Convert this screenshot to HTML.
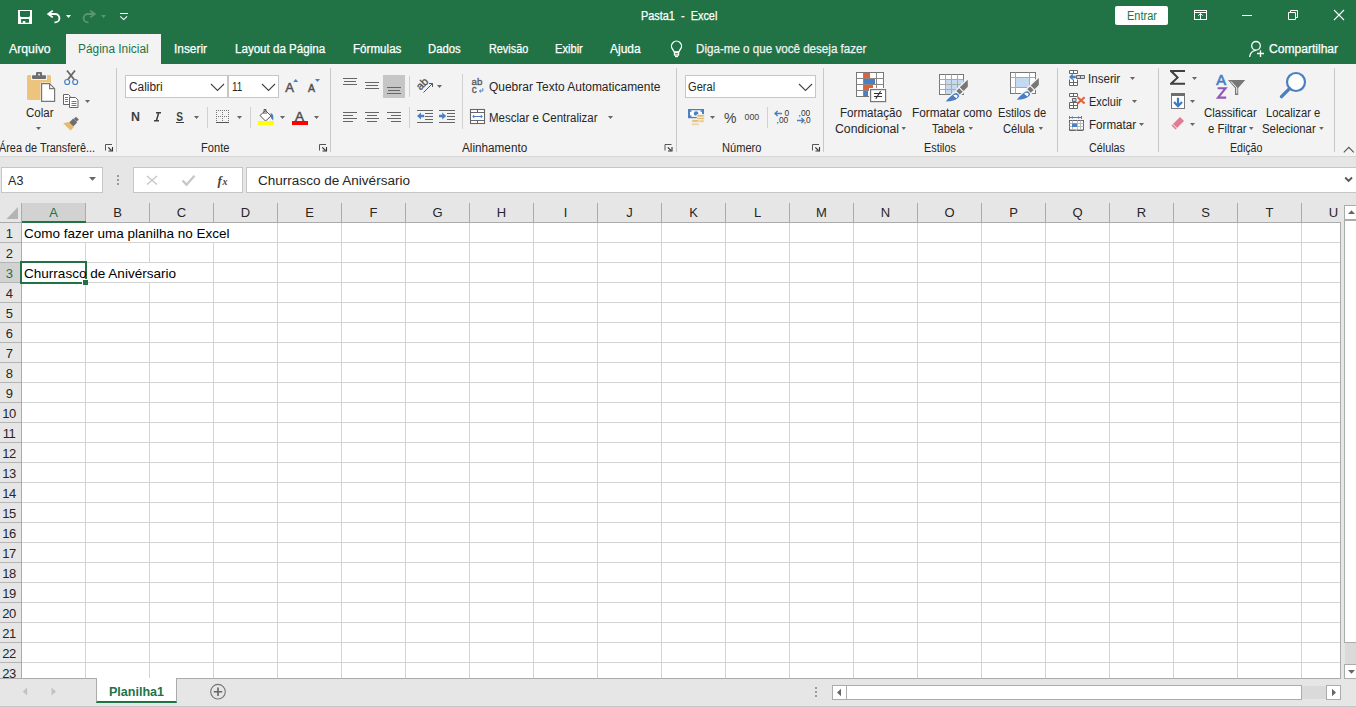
<!DOCTYPE html>
<html><head><meta charset="utf-8"><style>
*{box-sizing:border-box}
html,body{margin:0;padding:0}
body{width:1356px;height:707px;overflow:hidden;position:relative;background:#e6e6e6;font-family:"Liberation Sans",sans-serif}
.t{position:absolute;white-space:pre;transform-origin:0 0}
.abs{position:absolute}
.ch{position:absolute;top:203px;width:64px;height:19px;border-right:1px solid #ababab;font-size:13px;line-height:15px;padding-top:2px;text-align:center;color:#262626}
.rh{position:absolute;left:0;width:21px;height:20px;border-bottom:1px solid #b4b4b4;font-size:13px;line-height:15px;padding-top:3px;padding-right:3px;text-align:center;color:#262626;letter-spacing:-0.5px}
.sep{position:absolute;width:1px;background:#c8c8c8}
svg{position:absolute;overflow:visible}
</style></head><body>
<div class="abs" style="left:0;top:0;width:1356px;height:64px;background:#217346"></div>
<div class="abs" style="left:66px;top:34px;width:95px;height:30px;background:#f3f3f3"></div>
<div class="abs" style="left:1115px;top:6px;width:53px;height:19px;background:#fff;border-radius:2px"></div>
<div class="abs" style="left:0;top:64px;width:1356px;height:92px;background:#f3f3f3"></div>
<div class="abs" style="left:0;top:156px;width:1356px;height:1px;background:#d6d6d6"></div>
<!-- formula bar -->
<div class="abs" style="left:1px;top:167px;width:102px;height:26px;background:#fff;border:1px solid #c6c6c6"></div>
<div class="abs" style="left:133px;top:167px;width:110px;height:26px;background:#fff;border:1px solid #c6c6c6"></div>
<div class="abs" style="left:246px;top:167px;width:1115px;height:26px;background:#fff;border:1px solid #c6c6c6"></div>
<!-- grid -->
<div class="abs" style="left:22px;top:223px;width:1318px;height:455px;background-color:#fff;background-image:linear-gradient(to right,transparent 63px,#d4d4d4 63px),linear-gradient(to bottom,transparent 19px,#d4d4d4 19px);background-size:64px 20px,64px 20px"></div>
<div class="abs" style="left:85px;top:223px;width:1px;height:19px;background:#fff"></div>
<div class="abs" style="left:149px;top:223px;width:1px;height:19px;background:#fff"></div>
<div class="abs" style="left:213px;top:223px;width:1px;height:19px;background:#fff"></div>
<div class="abs" style="left:149px;top:263px;width:1px;height:19px;background:#fff"></div>
<div class="ch" style="left:22px;background:#d2d2d2;color:#217346;">A</div><div class="ch" style="left:86px;">B</div><div class="ch" style="left:150px;">C</div><div class="ch" style="left:214px;">D</div><div class="ch" style="left:278px;">E</div><div class="ch" style="left:342px;">F</div><div class="ch" style="left:406px;">G</div><div class="ch" style="left:470px;">H</div><div class="ch" style="left:534px;">I</div><div class="ch" style="left:598px;">J</div><div class="ch" style="left:662px;">K</div><div class="ch" style="left:726px;">L</div><div class="ch" style="left:790px;">M</div><div class="ch" style="left:854px;">N</div><div class="ch" style="left:918px;">O</div><div class="ch" style="left:982px;">P</div><div class="ch" style="left:1046px;">Q</div><div class="ch" style="left:1110px;">R</div><div class="ch" style="left:1174px;">S</div><div class="ch" style="left:1238px;">T</div><div class="ch" style="left:1302px;">U</div>
<div class="abs" style="left:0;top:222px;width:1340px;height:1px;background:#ababab"></div>
<div class="abs" style="left:22px;top:221px;width:64px;height:2px;background:#217346"></div>
<div class="rh" style="top:223px;">1</div><div class="rh" style="top:243px;">2</div><div class="rh" style="top:263px;background:#d2d2d2;color:#217346;">3</div><div class="rh" style="top:283px;">4</div><div class="rh" style="top:303px;">5</div><div class="rh" style="top:323px;">6</div><div class="rh" style="top:343px;">7</div><div class="rh" style="top:363px;">8</div><div class="rh" style="top:383px;">9</div><div class="rh" style="top:403px;">10</div><div class="rh" style="top:423px;">11</div><div class="rh" style="top:443px;">12</div><div class="rh" style="top:463px;">13</div><div class="rh" style="top:483px;">14</div><div class="rh" style="top:503px;">15</div><div class="rh" style="top:523px;">16</div><div class="rh" style="top:543px;">17</div><div class="rh" style="top:563px;">18</div><div class="rh" style="top:583px;">19</div><div class="rh" style="top:603px;">20</div><div class="rh" style="top:623px;">21</div><div class="rh" style="top:643px;">22</div><div class="rh" style="top:663px;">23</div>
<div class="abs" style="left:21px;top:203px;width:1px;height:475px;background:#ababab"></div>
<div class="abs" style="left:1340px;top:222px;width:1px;height:457px;background:#ababab"></div>
<div class="abs" style="left:1341px;top:203px;width:15px;height:476px;background:#e6e6e6"></div>
<!-- sheet bar -->
<div class="abs" style="left:0;top:678px;width:1356px;height:29px;background:#e6e6e6"></div>
<div class="abs" style="left:0;top:678px;width:1341px;height:1px;background:#ababab"></div>
<div class="abs" style="left:96px;top:678px;width:81px;height:25px;background:#fff;border-left:1px solid #ababab;border-right:1px solid #ababab;border-bottom:2px solid #217346"></div>
<div class="abs" style="left:0;top:706px;width:1356px;height:1px;background:#c6c6c6"></div>
<svg width="1356" height="707" style="left:0;top:0" viewBox="0 0 1356 707">
<!-- ===== Title bar ===== -->
<g fill="#fff">
  <path d="M18 10h14v14h-14z M20 11.1V16L21 17H29L30 16V11.1z M21.1 19V22.8H22.8V21H25.3V22.8H29V19z" fill-rule="evenodd"/>
</g>
<g fill="none" stroke="#fff" stroke-width="1.9">
  <path d="M49 14h6a4.4 4.2 0 0 1 0 8.4h-0.5"/>
</g>
<path d="M46.7 14 L52.2 9.9 L53.3 11.3 L49.8 14 L53.3 16.7 L52.2 18.1Z" fill="#fff"/>
<path d="M66 15h5l-2.5 3z" fill="#fff"/>
<g opacity="0.25">
  <path d="M94 14h-6a4.4 4.2 0 0 0 0 8.4h0.5" fill="none" stroke="#fff" stroke-width="1.9"/>
  <path d="M96.3 14 L90.8 9.9 L89.7 11.3 L93.2 14 L89.7 16.7 L90.8 18.1Z" fill="#fff"/>
  <path d="M101 15h5l-2.5 3z" fill="#fff"/>
</g>
<path d="M120 13.5h8" stroke="#fff" stroke-width="1"/>
<path d="M120.3 16.3l3.4 3.3l3.4-3.3" fill="none" stroke="#fff" stroke-width="1.1"/>
<!-- ribbon display options -->
<g fill="none" stroke="#fff" stroke-width="1">
  <rect x="1194.5" y="10.5" width="12" height="9"/>
  <path d="M1194.5 12.5h12 M1200.5 13.5v6 M1198.3 15.7l2.2-2.2l2.2 2.2"/>
  <path d="M1242 15.5h10"/>
  <path d="M1288.5 12.5h7v7h-7z M1290.5 12.5v-2h7v7h-2"/>
  <path d="M1334 10l10 10 M1344 10l-10 10" stroke-width="1.1"/>
</g>
<!-- bulb -->
<g fill="none" stroke="#fff" stroke-width="1.35">
  <path d="M674.3 52 L672.6 49.2 A5 5 0 1 1 680.4 49.2 L678.7 52 Z"/>
  <rect x="674.5" y="52.5" width="4" height="2.5"/>
  <path d="M675 56.5h3"/>
</g>
<!-- person -->
<g fill="none" stroke="#fff" stroke-width="1.3">
  <circle cx="1256" cy="45.8" r="4.3"/>
  <path d="M1249.6 57 Q1250.2 51 1256 50.3"/>
  <path d="M1260.5 50.3v6.7 M1257 53.5h7"/>
</g>

<!-- ===== Ribbon: Clipboard ===== -->
<rect x="27" y="75" width="24" height="25" rx="1.5" fill="#ecc47e"/>
<rect x="31" y="74" width="16" height="6" fill="#f3f3f3"/>
<rect x="32" y="75.3" width="14" height="3.6" rx="0.8" fill="#6e6e6e"/>
<rect x="36" y="72" width="6" height="4.5" rx="1" fill="#6e6e6e"/>
<rect x="38.3" y="73.8" width="1.6" height="1.6" fill="#f3f3f3"/>
<path d="M40.5 82.5H50L56 88.5V102.5H40.5Z" fill="#f3f3f3"/>
<path d="M41.6 83.6H49.5L54.6 88.7V101.4H41.6Z" fill="#fff" stroke="#777" stroke-width="1.2"/>
<path d="M49.6 83.6V88.6H54.6" fill="none" stroke="#777" stroke-width="1.2"/>
<path d="M36 127h5l-2.5 3z" fill="#666"/>
<!-- scissors -->
<path d="M67 70.5L74.5 80 M75 70.5L67.5 80" stroke="#666" stroke-width="1.8" fill="none"/>
<circle cx="67.2" cy="82" r="2.5" fill="#f3f3f3" stroke="#4a7fc1" stroke-width="1.2"/>
<circle cx="75.2" cy="82" r="2.5" fill="#f3f3f3" stroke="#4a7fc1" stroke-width="1.2"/>
<!-- copy -->
<path d="M63.5 94.5h5l1.5 1.5v8.5h-6.5z" fill="#fff" stroke="#666" stroke-width="1"/>
<path d="M65 97.5h3 M65 99.5h3 M65 101.5h3" stroke="#4a7fc1" stroke-width="1"/>
<path d="M69.5 97.5h6l2.5 2.5v7.5h-8.5z" fill="#fff" stroke="#666" stroke-width="1"/>
<path d="M71.5 101.5h5 M71.5 103.5h5 M71.5 105.5h5" stroke="#4a7fc1" stroke-width="1"/>
<path d="M85 100h5l-2.5 3z" fill="#666"/>
<!-- format painter -->
<path d="M75.2 117.6L78.6 121" stroke="#6e6e6e" stroke-width="0" /><path d="M76 116.8 L78.8 119.6 L76.6 121.8 L73.8 119Z" fill="#6e6e6e"/>
<path d="M69.2 122.6 L73.2 118.6 L77.2 122.6 L73.2 126.6Z" fill="#6e6e6e"/>
<path d="M63.2 123.2 L68.6 122 L73.8 127.2 L70.6 130.6Z" fill="#e8b96a"/>
<!-- launchers -->
<g id="launch">
  <path d="M105.5 150.5V144.5H112" fill="none" stroke="#555" stroke-width="1"/>
  <path d="M108.3 147.3L111.5 150.5" stroke="#333" stroke-width="1.1"/>
  <path d="M108.5 151H112.5V147" fill="none" stroke="#333" stroke-width="1.1"/>
</g>
<use href="#launch" x="214" y="0"/>
<use href="#launch" x="559.5" y="0"/>
<use href="#launch" x="707" y="0"/>
<!-- separators -->
<g fill="#c8c8c8">
  <rect x="116" y="68" width="1" height="84"/>
  <rect x="330" y="68" width="1" height="84"/>
  <rect x="676" y="68" width="1" height="84"/>
  <rect x="823" y="68" width="1" height="84"/>
  <rect x="1057" y="68" width="1" height="84"/>
  <rect x="1158" y="68" width="1" height="84"/>
  <rect x="1334" y="68" width="1" height="84"/>
  <rect x="207" y="107" width="1" height="21" fill="#d0d0d0"/>
  <rect x="250" y="107" width="1" height="21" fill="#d0d0d0"/>
  <rect x="409" y="76" width="1" height="21" fill="#d0d0d0"/>
  <rect x="409" y="107" width="1" height="21" fill="#d0d0d0"/>
  <rect x="462" y="74" width="1" height="55" fill="#d0d0d0"/>
  <rect x="767" y="107" width="1" height="21" fill="#d0d0d0"/>
</g>
<!-- ===== Font group ===== -->
<rect x="125.5" y="75.5" width="102" height="22" fill="#fff" stroke="#c6c6c6"/>
<rect x="228.5" y="75.5" width="50" height="22" fill="#fff" stroke="#c6c6c6"/>
<path d="M211 84l6.5 6.5l6.5-6.5 M262 84l6.5 6.5l6.5-6.5" fill="none" stroke="#444" stroke-width="1.1"/>
<text x="285.3" y="92" font-family="Liberation Sans" font-size="13" fill="#505050" stroke="#505050" stroke-width="0.45">A</text>
<path d="M293.2 82h5l-2.5-3z" fill="#4a7fc1"/>
<text x="308" y="92" font-family="Liberation Sans" font-size="10.5" fill="#505050" stroke="#505050" stroke-width="0.45">A</text>
<path d="M315 79h5l-2.5 3z" fill="#4a7fc1"/>
<text x="131" y="121" font-family="Liberation Sans" font-size="12.4" font-weight="bold" fill="#404040">N</text>
<path d="M156 112.7h5 M154 120.8h5 M158.7 112.7l-2.3 8.1" fill="none" stroke="#404040" stroke-width="1.5"/>
<text x="176.2" y="121" font-family="Liberation Sans" font-size="12.4" font-weight="bold" fill="#404040" transform="translate(176.2 0) scale(0.82 1) translate(-176.2 0)">S</text>
<rect x="176" y="122" width="8" height="1" fill="#404040"/>
<path d="M194 116h5l-2.5 3z" fill="#666"/>
<!-- borders -->
<g fill="#777">
  <path d="M216 110h1v1h-1z" id="dot"/>
</g>
<path d="M216.5 110v12 M222.5 110v12 M228.5 110v12 M216 110.5h13 M216 116.5h13" stroke="#777" stroke-width="1" stroke-dasharray="1 1" fill="none"/>
<rect x="216" y="122" width="13" height="1" fill="#555"/>
<path d="M237 116h5l-2.5 3z" fill="#666"/>
<!-- fill bucket -->
<path d="M265.5 110.5 L271 116 L265.5 121 L260 115.5 Z" fill="#fff" stroke="#555" stroke-width="1"/>
<path d="M264 114 V109.5 H266 V114" fill="none" stroke="#555" stroke-width="1"/>
<path d="M270.5 113 Q274.5 114 273 120.5 L271 118 Z" fill="#4a7fc1"/>
<rect x="258" y="121" width="16" height="4" fill="#ffff00"/>
<path d="M280 116h5l-2.5 3z" fill="#666"/>
<text x="295" y="121" font-family="Liberation Sans" font-size="13.5" fill="#505050" stroke="#505050" stroke-width="0.5">A</text>
<rect x="292" y="121" width="16" height="4" fill="#ff0000"/>
<path d="M314 116h5l-2.5 3z" fill="#666"/>

<!-- ===== Alignment ===== -->
<rect x="383" y="75" width="22" height="23" fill="#c6c6c6"/>
<g stroke="#666" stroke-width="1" fill="none">
  <path d="M343 78.5h14 M344 81.5h12 M343 84.5h14"/>
  <path d="M365 82.5h14 M366 85.5h12 M365 88.5h14"/>
  <path d="M387 87.5h14 M388 90.5h12 M387 93.5h14"/>
  <path d="M343 112.5h14 M343 115.5h10 M343 118.5h14 M343 121.5h10"/>
  <path d="M365 112.5h14 M367 115.5h10 M365 118.5h14 M367 121.5h10"/>
  <path d="M387 112.5h14 M391 115.5h10 M387 118.5h14 M391 121.5h10"/>
  <path d="M417 110.5h16 M425 113.5h8 M425 116.5h8 M425 119.5h8 M417 122.5h16"/>
  <path d="M439 110.5h16 M447 113.5h8 M447 116.5h8 M447 119.5h8 M439 122.5h16"/>
</g>
<path d="M417 116 L421 112.4 L421 114.8 L424.2 114.8 L424.2 117.2 L421 117.2 L421 119.6Z" fill="#4a7fc1"/>
<path d="M446.2 116 L442.2 112.4 L442.2 114.8 L439 114.8 L439 117.2 L442.2 117.2 L442.2 119.6Z" fill="#4a7fc1"/>
<!-- orientation -->
<text x="0" y="0" font-family="Liberation Sans" font-size="11" fill="#555" stroke="#555" stroke-width="0.35" transform="translate(420.4,90.8) rotate(-45)">ab</text>
<path d="M423.5 92.5L432.5 83.5 M429 83.5h3.5v3.5" fill="none" stroke="#555" stroke-width="1"/>
<path d="M437 85h5l-2.5 3z" fill="#666"/>
<!-- wrap text -->
<text x="471.6" y="85.3" font-family="Liberation Sans" font-size="9.8" fill="#555" stroke="#555" stroke-width="0.3">ab</text>
<text x="471.8" y="93" font-family="Liberation Sans" font-size="10" fill="#555" stroke="#555" stroke-width="0.3">c</text>
<path d="M482.8 88.2v2.8h-3.3 M481 89.6l-1.5 1.4l1.5 1.4" fill="none" stroke="#4a7fc1" stroke-width="1"/>
<!-- merge -->
<rect x="470.5" y="109.5" width="14" height="14" fill="#fff" stroke="#666" stroke-width="1.1"/>
<path d="M470.5 112.5h14 M470.5 120.5h14 M477.5 109.5v3 M477.5 120.5v3" stroke="#666" stroke-width="1" fill="none"/>
<path d="M473 116.5h9" stroke="#4a7fc1" stroke-width="1"/>
<path d="M472.2 116.5l2-2v4z M482.8 116.5l-2-2v4z" fill="#4a7fc1"/>
<path d="M608 116h5l-2.5 3z" fill="#666"/>

<!-- ===== Number ===== -->
<rect x="685.5" y="75.5" width="130" height="22" fill="#fff" stroke="#c6c6c6"/>
<path d="M799 84l6.5 6.5l6.5-6.5" fill="none" stroke="#444" stroke-width="1.1"/>
<!-- accounting -->
<rect x="688" y="109" width="16" height="9.2" fill="#4a7fc1"/>
<rect x="690" y="110.3" width="12" height="6.6" fill="#fff"/>
<circle cx="696.1" cy="113.5" r="2.3" fill="#4a7fc1"/>
<rect x="690" y="110.3" width="1.5" height="1.5" fill="#4a7fc1"/>
<rect x="700.5" y="110.3" width="1.5" height="1.5" fill="#4a7fc1"/>
<rect x="690" y="115.4" width="1.5" height="1.5" fill="#4a7fc1"/>
<g fill="#e8b96a" stroke="#f3f3f3" stroke-width="0.9">
  <rect x="696.6" y="114.4" width="7.8" height="2.8" rx="1.3"/>
  <rect x="696.6" y="117.4" width="7.8" height="2.4" rx="1.1"/>
  <rect x="697.6" y="120" width="6.8" height="2.2" rx="1"/>
  <rect x="691.6" y="119.6" width="7.6" height="2.8" rx="1.3"/>
  <rect x="691.6" y="122.4" width="7.6" height="1.6" rx="0.7"/>
  <rect x="691.6" y="124" width="7.6" height="1.6" rx="0.7"/>
</g>
<path d="M710 116h5l-2.5 3z" fill="#666"/>
<text x="724" y="123" font-family="Liberation Sans" font-size="14" fill="#444">%</text>
<text x="744.5" y="120" font-family="Liberation Sans" font-size="9.8" fill="#444" transform="translate(744.5 0) scale(0.9 1) translate(-744.5 0)">000</text>
<!-- inc decimal -->
<path d="M775 113.5h7 M777.6 111l-2.6 2.5l2.6 2.5" fill="none" stroke="#4a7fc1" stroke-width="1.4"/>
<text x="784.6" y="116" font-family="Liberation Sans" font-size="8.4" fill="#333">0</text>
<text x="776.6" y="123.2" font-family="Liberation Sans" font-size="8.4" fill="#333">,00</text>
<text x="798.6" y="116" font-family="Liberation Sans" font-size="8.4" fill="#333">,00</text>
<path d="M797 120.5h7 M801.4 118l2.6 2.5l-2.6 2.5" fill="none" stroke="#4a7fc1" stroke-width="1.4"/>
<text x="803.8" y="123.2" font-family="Liberation Sans" font-size="8.4" fill="#333">,0</text>

<!-- ===== Styles ===== -->
<g>
  <rect x="856.5" y="72.5" width="27" height="24" fill="#fff" stroke="#777" stroke-width="1"/>
  <rect x="864" y="73" width="6" height="5" fill="#e0603a"/>
  <rect x="864" y="79" width="11" height="5" fill="#4a7fc1"/>
  <rect x="864" y="85" width="9" height="5" fill="#e0603a"/>
  <rect x="864" y="91" width="4" height="5" fill="#4a7fc1"/>
  <path d="M863.5 72.5v24 M876.5 72.5v24 M856.5 78.5h27 M856.5 84.5h27 M856.5 90.5h27" stroke="#888" stroke-width="1"/>
  <rect x="869" y="88" width="18" height="15" fill="#f3f3f3"/>
  <rect x="870.6" y="89.6" width="15" height="12" fill="#fff" stroke="#777" stroke-width="1.2"/>
  <path d="M874 93.5h8 M874 96.5h8 M880.6 91.2l-4.8 7.6" stroke="#333" stroke-width="1.2" fill="none"/>
  <path d="M901.5 127h4.5l-2.25 3z" fill="#666"/>
</g>
<g>
  <rect x="939.5" y="74.5" width="24" height="20" fill="#fff" stroke="#777" stroke-width="1"/>
  <rect x="946" y="80" width="17.5" height="14" fill="#c5d9f1"/>
  <path d="M945.5 74.5v20 M951.5 74.5v20 M957.5 74.5v20 M939.5 79.5h24 M939.5 84.5h24 M939.5 89.5h24" stroke="#aaa" stroke-width="1"/>
  <g id="brush">
    <path d="M967.8 79.7 L967.8 86.8 L963.6 91 L959.8 87.2 Z M959.3 87.9 L963 91.6 L960 94.6 L956.3 90.9 Z M945.7 101.6 Q951 95 955.5 93 Q958.8 93.3 959.2 96.5 Q957 100 950 101.3 Z" fill="#f3f3f3" stroke="#f3f3f3" stroke-width="2.6" stroke-linejoin="round"/>
    <path d="M967.8 79.7 L967.8 86.8 L963.6 91 L959.8 87.2 Z" fill="#777"/>
    <path d="M959.1 88.3 L962.6 91.8 L959.8 94.6 L956.3 91.1 Z" fill="#777"/>
    <path d="M945.7 101.6 Q951 95 955.5 93 Q958.8 93.3 959.2 96.5 Q957 100 950 101.3 Z" fill="#4a7fc1"/>
    <path d="M953.2 95.6 Q955.5 93.6 957.8 95.9 L956.4 98.2 Z" fill="#fff"/>
  </g>
  <path d="M968.5 127h4.5l-2.25 3z" fill="#666"/>
</g>
<g>
  <rect x="1010.5" y="72.5" width="25" height="21" fill="#fff" stroke="#777" stroke-width="1"/>
  <rect x="1016" y="78" width="13.5" height="9" fill="#c5d9f1"/>
  <path d="M1015.5 72.5v21 M1029.5 72.5v21 M1010.5 77.5h25 M1010.5 87.5h25" stroke="#aaa" stroke-width="1"/>
  <use href="#brush" x="71" y="-1.8"/>
  <path d="M1038.6 127h4.5l-2.25 3z" fill="#666"/>
</g>

<!-- ===== Cells ===== -->
<g stroke="#666" stroke-width="1" fill="#fff">
  <path d="M1069.5 70.5h8v3h-8z M1073.5 70.5v3"/>
  <path d="M1076.5 75.5h8v3h-8z" fill="#c5d9f1"/>
  <path d="M1080.5 75.5v3"/>
  <path d="M1069.5 79.5v6h8v-6 M1069.5 82.5h8 M1073.5 79.5v6" fill="#fff"/>
</g>
<path d="M1069 77 L1072.8 73.6 L1072.8 75.8 L1075.8 75.8 L1075.8 78.2 L1072.8 78.2 L1072.8 80.4Z" fill="#4a7fc1"/>
<path d="M1130 77h5l-2.5 3z" fill="#666"/>
<g stroke="#666" stroke-width="1" fill="#fff">
  <path d="M1069.5 93.5h8v3h-8z M1073.5 93.5v3"/>
  <path d="M1072.5 98.5h3.5v3h-3.5z" fill="#c5d9f1"/>
  <path d="M1069.5 102.5h8v6h-8z M1069.5 105.5h8 M1073.5 102.5v6"/>
</g>
<path d="M1077.6 97.2l7 6.3 M1084.6 97.2l-7 6.3" stroke="#e0603a" stroke-width="2"/>
<path d="M1132 100h5l-2.5 3z" fill="#666"/>
<g>
  <path d="M1069.5 116v3 M1081.5 116v3 M1070 117.5h11" stroke="#4a7fc1" stroke-width="1"/>
  <path d="M1071 117.5l1.8-1.6v3.2z M1080 117.5l-1.8-1.6v3.2z" fill="#4a7fc1"/>
  <rect x="1069.5" y="120.5" width="14" height="9.5" fill="#fff" stroke="#666" stroke-width="1"/>
  <path d="M1072.5 120.5v9 M1077.5 120.5v9 M1080.5 120.5v9 M1069.5 123.5h14 M1069.5 126.5h14" stroke="#bbb" stroke-width="1"/>
  <rect x="1072" y="123.5" width="5" height="3.5" fill="#4a7fc1"/>
  <path d="M1069.5 130.5h6 M1077 130.5h6" stroke="#666" stroke-width="1"/>
</g>
<path d="M1139 123h5l-2.5 3z" fill="#666"/>

<!-- ===== Editing ===== -->
<path d="M1170 70 H1185 V72.1 H1173.6 L1179 77.4 L1173.6 82.7 H1185 V84.8 H1170 V83.2 L1176.2 77.4 L1170 71.6 Z" fill="#404040"/>
<path d="M1192 77h5l-2.5 3z" fill="#666"/>
<rect x="1171.5" y="93.5" width="13" height="15" fill="#fff" stroke="#777" stroke-width="1"/>
<rect x="1171" y="93" width="14" height="3" fill="#6e6e6e"/>
<path d="M1178 97.8v8.2 M1174 102l4 4.2l4-4.2" fill="none" stroke="#3d7ac0" stroke-width="2.2"/>
<path d="M1190 100h5l-2.5 3z" fill="#666"/>
<path d="M1175.5 129.5 L1171.5 125.5 L1180 117 L1184 121 Z" fill="#e17b93"/>
<path d="M1172.8 124.2 L1176.8 128.2" stroke="#f3f3f3" stroke-width="1"/>
<path d="M1190 123h5l-2.5 3z" fill="#666"/>
<text x="1216.2" y="85" font-family="Liberation Sans" font-size="15.5" fill="#4a7fc1" stroke="#4a7fc1" stroke-width="0.7" transform="translate(1216.2 0) scale(0.95 1) translate(-1216.2 0)">A</text>
<path d="M1217.6 88.2H1225.6L1218 97.6H1226.2" fill="none" stroke="#9457b5" stroke-width="2.1" stroke-linejoin="miter"/>
<path d="M1228 80 H1245.2 L1238.2 88 V95 H1235 V88 Z" fill="#777"/>
<path d="M1231 81.5 L1236.8 87.8 V93.5" fill="none" stroke="#fff" stroke-width="1"/>
<circle cx="1296" cy="82" r="9" fill="#fff" stroke="#4a7fc1" stroke-width="2.2"/>
<path d="M1289.5 88.6 L1281.5 96.6" stroke="#4a7fc1" stroke-width="3.4" stroke-linecap="round"/>
<path d="M1249 127h4.5l-2.25 3z" fill="#666"/>
<path d="M1319.2 127h4.5l-2.25 3z" fill="#666"/>
<path d="M1343.8 152.3l5-5l5 5" fill="none" stroke="#555" stroke-width="1.1"/>

<!-- ===== Formula bar ===== -->
<path d="M89 177h7l-3.5 3.7z" fill="#666"/>
<g fill="#9a9a9a"><rect x="117" y="175" width="2" height="2"/><rect x="117" y="179" width="2" height="2"/><rect x="117" y="183" width="2" height="2"/></g>
<path d="M147 176l10 8.5 M157 176l-10 8.5" stroke="#c8c8c8" stroke-width="1.5"/>
<path d="M182.5 180.5l4 4.2l8-9" fill="none" stroke="#c8c8c8" stroke-width="2.4"/>
<text x="217.5" y="184.5" font-family="Liberation Serif" font-size="13" font-style="italic" font-weight="bold" fill="#444">f</text>
<text x="222.6" y="184.5" font-family="Liberation Serif" font-size="10" font-style="italic" font-weight="bold" fill="#444">x</text>
<path d="M1345.2 177.5l3.4 3.4l3.4-3.4" fill="none" stroke="#555" stroke-width="1.8"/>

<!-- ===== select all triangle ===== -->
<path d="M18 207V219H6.5Z" fill="#b4b4b4"/>
<!-- selection -->
<rect x="21" y="262" width="65" height="21" fill="none" stroke="#217346" stroke-width="2"/>
<rect x="82" y="279" width="6" height="6" fill="#fff"/>
<rect x="83" y="280" width="5" height="5" fill="#217346"/>

<!-- ===== scrollbars ===== -->
<rect x="1344.5" y="205.5" width="12" height="14" fill="#fff" stroke="#ababab"/>
<path d="M1348 214h7l-3.5-3.8z" fill="#666"/>
<rect x="1344.5" y="220.5" width="12" height="422" fill="#fff" stroke="#ababab"/>
<rect x="1345" y="643" width="11" height="21" fill="#dadada"/>
<rect x="1344.5" y="664.5" width="12" height="14" fill="#fff" stroke="#ababab"/>
<path d="M1348 670h7l-3.5 3.8z" fill="#666"/>
<g fill="#9a9a9a"><rect x="815" y="687" width="2" height="2"/><rect x="815" y="691" width="2" height="2"/><rect x="815" y="695" width="2" height="2"/></g>
<rect x="832.5" y="685.5" width="14" height="14" fill="#fff" stroke="#ababab"/>
<path d="M837 692.5l4-3.7v7.4z" fill="#666"/>
<rect x="846.5" y="685.5" width="455" height="14" fill="#fff" stroke="#ababab"/>
<rect x="1302" y="686" width="24" height="13" fill="#dadada"/>
<rect x="1326.5" y="685.5" width="14" height="14" fill="#fff" stroke="#ababab"/>
<path d="M1336 692.5l-4-3.7v7.4z" fill="#666"/>
<!-- sheet nav -->
<path d="M22.7 691.5l4.5-4v8z" fill="#c2c2c2"/>
<path d="M56 691.5l-4.5-4v8z" fill="#c2c2c2"/>
<circle cx="218" cy="691.7" r="7.3" fill="none" stroke="#777" stroke-width="1.1"/>
<path d="M218 687.5v8.4 M213.8 691.7h8.4" stroke="#666" stroke-width="1.6"/>
</svg>

<div class="t" style="left:640.80px;top:9px;font-size:12px;line-height:14px;font-weight:normal;color:#ffffff;transform:scaleX(0.9080);-webkit-text-stroke:0.25px #ffffff;">Pasta1  -  Excel</div>
<div class="t" style="left:1126.80px;top:9px;font-size:12px;line-height:14px;font-weight:normal;color:#217346;transform:scaleX(0.9149);">Entrar</div>
<div class="t" style="left:8.90px;top:42px;font-size:12px;line-height:14px;font-weight:normal;color:#ffffff;transform:scaleX(1.0240);-webkit-text-stroke:0.25px #ffffff;">Arquivo</div>
<div class="t" style="left:78.00px;top:42px;font-size:12px;line-height:14px;font-weight:normal;color:#217346;transform:scaleX(0.9899);">Página Inicial</div>
<div class="t" style="left:174.01px;top:42px;font-size:12px;line-height:14px;font-weight:normal;color:#ffffff;transform:scaleX(0.9894);-webkit-text-stroke:0.25px #ffffff;">Inserir</div>
<div class="t" style="left:234.50px;top:42px;font-size:12px;line-height:14px;font-weight:normal;color:#ffffff;transform:scaleX(0.9655);-webkit-text-stroke:0.25px #ffffff;">Layout da Página</div>
<div class="t" style="left:352.60px;top:42px;font-size:12px;line-height:14px;font-weight:normal;color:#ffffff;transform:scaleX(0.9678);-webkit-text-stroke:0.25px #ffffff;">Fórmulas</div>
<div class="t" style="left:428.30px;top:42px;font-size:12px;line-height:14px;font-weight:normal;color:#ffffff;transform:scaleX(0.9398);-webkit-text-stroke:0.25px #ffffff;">Dados</div>
<div class="t" style="left:488.50px;top:42px;font-size:12px;line-height:14px;font-weight:normal;color:#ffffff;transform:scaleX(0.9043);-webkit-text-stroke:0.25px #ffffff;">Revisão</div>
<div class="t" style="left:555.00px;top:42px;font-size:12px;line-height:14px;font-weight:normal;color:#ffffff;transform:scaleX(0.9264);-webkit-text-stroke:0.25px #ffffff;">Exibir</div>
<div class="t" style="left:610.00px;top:42px;font-size:12px;line-height:14px;font-weight:normal;color:#ffffff;transform:scaleX(0.9994);-webkit-text-stroke:0.25px #ffffff;">Ajuda</div>
<div class="t" style="left:696.30px;top:42px;font-size:12px;line-height:14px;font-weight:normal;color:#f2f2f2;transform:scaleX(0.9676);-webkit-text-stroke:0.25px #f2f2f2;">Diga-me o que você deseja fazer</div>
<div class="t" style="left:1268.70px;top:42px;font-size:12px;line-height:14px;font-weight:normal;color:#ffffff;transform:scaleX(1.0059);-webkit-text-stroke:0.25px #ffffff;">Compartilhar</div>
<div class="t" style="left:25.50px;top:106px;font-size:12px;line-height:14px;font-weight:normal;color:#262626;transform:scaleX(0.9589);">Colar</div>
<div class="t" style="left:-1.00px;top:141px;font-size:12px;line-height:14px;font-weight:normal;color:#262626;transform:scaleX(0.9062);">Área de Transferê...</div>
<div class="t" style="left:128.80px;top:80px;font-size:12px;line-height:14px;font-weight:normal;color:#262626;transform:scaleX(0.9867);">Calibri</div>
<div class="t" style="left:231.80px;top:80px;font-size:12px;line-height:14px;font-weight:normal;color:#262626;transform:scaleX(0.8292);">11</div>
<div class="t" style="left:200.70px;top:141px;font-size:12px;line-height:14px;font-weight:normal;color:#262626;transform:scaleX(0.9255);">Fonte</div>
<div class="t" style="left:489.20px;top:80px;font-size:12px;line-height:14px;font-weight:normal;color:#262626;transform:scaleX(0.9972);">Quebrar Texto Automaticamente</div>
<div class="t" style="left:489.20px;top:111px;font-size:12px;line-height:14px;font-weight:normal;color:#262626;transform:scaleX(0.9570);">Mesclar e Centralizar</div>
<div class="t" style="left:462.00px;top:141px;font-size:12px;line-height:14px;font-weight:normal;color:#262626;transform:scaleX(0.9771);">Alinhamento</div>
<div class="t" style="left:688.30px;top:80px;font-size:12px;line-height:14px;font-weight:normal;color:#262626;transform:scaleX(0.9241);">Geral</div>
<div class="t" style="left:721.60px;top:141px;font-size:12px;line-height:14px;font-weight:normal;color:#262626;transform:scaleX(0.9231);">Número</div>
<div class="t" style="left:839.50px;top:106px;font-size:12px;line-height:14px;font-weight:normal;color:#262626;transform:scaleX(0.9681);">Formatação</div>
<div class="t" style="left:834.50px;top:122px;font-size:12px;line-height:14px;font-weight:normal;color:#262626;transform:scaleX(1.0219);">Condicional</div>
<div class="t" style="left:911.70px;top:106px;font-size:12px;line-height:14px;font-weight:normal;color:#262626;transform:scaleX(0.9831);">Formatar como</div>
<div class="t" style="left:931.90px;top:122px;font-size:12px;line-height:14px;font-weight:normal;color:#262626;transform:scaleX(0.9219);">Tabela</div>
<div class="t" style="left:998.40px;top:106px;font-size:12px;line-height:14px;font-weight:normal;color:#262626;transform:scaleX(0.9264);">Estilos de</div>
<div class="t" style="left:1002.70px;top:122px;font-size:12px;line-height:14px;font-weight:normal;color:#262626;transform:scaleX(0.9259);">Célula</div>
<div class="t" style="left:924.40px;top:141px;font-size:12px;line-height:14px;font-weight:normal;color:#262626;transform:scaleX(0.9026);">Estilos</div>
<div class="t" style="left:1087.74px;top:72px;font-size:12px;line-height:14px;font-weight:normal;color:#262626;transform:scaleX(0.9646);">Inserir</div>
<div class="t" style="left:1088.70px;top:95px;font-size:12px;line-height:14px;font-weight:normal;color:#262626;transform:scaleX(0.9164);">Excluir</div>
<div class="t" style="left:1088.70px;top:118px;font-size:12px;line-height:14px;font-weight:normal;color:#262626;transform:scaleX(0.9676);">Formatar</div>
<div class="t" style="left:1089.40px;top:141px;font-size:12px;line-height:14px;font-weight:normal;color:#262626;transform:scaleX(0.8971);">Células</div>
<div class="t" style="left:1204.30px;top:106px;font-size:12px;line-height:14px;font-weight:normal;color:#262626;transform:scaleX(0.9522);">Classificar</div>
<div class="t" style="left:1207.50px;top:122px;font-size:12px;line-height:14px;font-weight:normal;color:#262626;transform:scaleX(0.9466);">e Filtrar</div>
<div class="t" style="left:1266.40px;top:106px;font-size:12px;line-height:14px;font-weight:normal;color:#262626;transform:scaleX(0.9356);">Localizar e</div>
<div class="t" style="left:1262.20px;top:122px;font-size:12px;line-height:14px;font-weight:normal;color:#262626;transform:scaleX(0.9470);">Selecionar</div>
<div class="t" style="left:1229.50px;top:141px;font-size:12px;line-height:14px;font-weight:normal;color:#262626;transform:scaleX(0.8834);">Edição</div>
<div class="t" style="left:8.00px;top:174px;font-size:12px;line-height:14px;font-weight:normal;color:#262626;transform:scaleX(1.0464);">A3</div>
<div class="t" style="left:258.40px;top:174px;font-size:12px;line-height:14px;font-weight:normal;color:#262626;transform:scaleX(1.1281);">Churrasco de Anivérsario</div>
<div class="t" style="left:24.40px;top:226px;font-size:13px;line-height:15px;font-weight:normal;color:#000;transform:scaleX(1.0379);">Como fazer uma planilha no Excel</div>
<div class="t" style="left:24.40px;top:266px;font-size:13px;line-height:15px;font-weight:normal;color:#000;transform:scaleX(1.0420);">Churrasco de Anivérsario</div>
<div class="t" style="left:108.60px;top:685px;font-size:12px;line-height:14px;font-weight:bold;color:#217346;transform:scaleX(1.0450);">Planilha1</div>
</body></html>
